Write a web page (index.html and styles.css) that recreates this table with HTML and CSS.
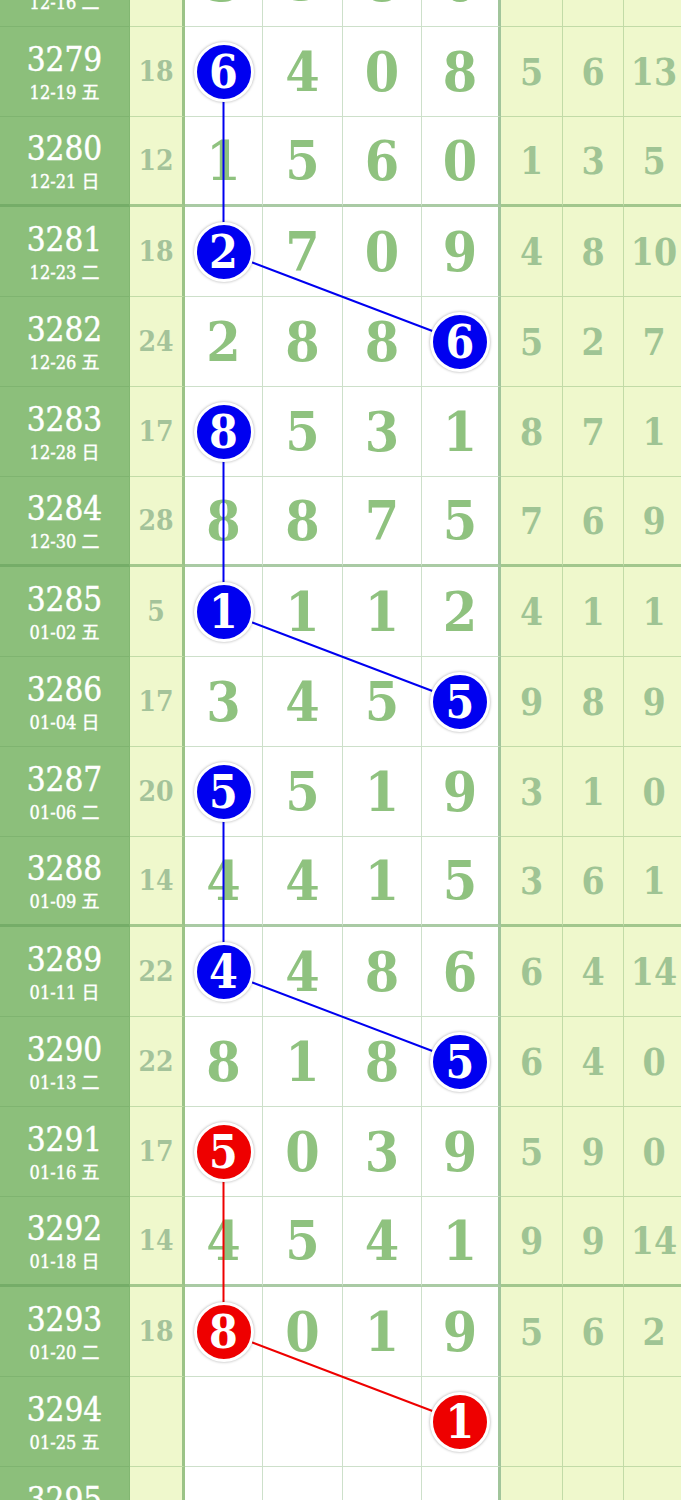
FILE: index.html
```html
<!DOCTYPE html>
<html lang="zh">
<head>
<meta charset="utf-8">
<title>走势图</title>
<link rel="stylesheet" href="styles.css">
</head>
<body>
<div class="table">
  <svg class="lines" width="685" height="1620" viewBox="0 0 685 1620">
    <g stroke="#0000f0" stroke-width="2" fill="none">
      <line x1="223.5" y1="134.5" x2="223.5" y2="314.5"/>
      <line x1="223.5" y1="314.5" x2="460" y2="404.5"/>
      <line x1="223.5" y1="494.5" x2="223.5" y2="674.5"/>
      <line x1="223.5" y1="674.5" x2="460" y2="764.5"/>
      <line x1="223.5" y1="854.5" x2="223.5" y2="1034.5"/>
      <line x1="223.5" y1="1034.5" x2="460" y2="1124.5"/>
    </g>
    <g stroke="#ee0000" stroke-width="2" fill="none">
      <line x1="223.5" y1="1214.5" x2="223.5" y2="1394.5"/>
      <line x1="223.5" y1="1394.5" x2="460" y2="1484.5"/>
    </g>
  </svg>

  <div class="row">
    <div class="c id"><span class="no">3278</span><span class="dt">12-16 二</span></div>
    <div class="c sum">16</div>
    <div class="c d">3</div><div class="c d">5</div><div class="c d">8</div><div class="c d last">0</div>
    <div class="c r">3</div><div class="c r">5</div><div class="c r">8</div>
  </div>

  <div class="row">
    <div class="c id"><span class="no">3279</span><span class="dt">12-19 五</span></div>
    <div class="c sum">18</div>
    <div class="c d"><span class="ball blue">6</span></div><div class="c d">4</div><div class="c d">0</div><div class="c d last">8</div>
    <div class="c r">5</div><div class="c r">6</div><div class="c r">13</div>
  </div>

  <div class="row gend">
    <div class="c id"><span class="no">3280</span><span class="dt">12-21 日</span></div>
    <div class="c sum">12</div>
    <div class="c d">1</div><div class="c d">5</div><div class="c d">6</div><div class="c d last">0</div>
    <div class="c r">1</div><div class="c r">3</div><div class="c r">5</div>
  </div>

  <div class="row">
    <div class="c id"><span class="no">3281</span><span class="dt">12-23 二</span></div>
    <div class="c sum">18</div>
    <div class="c d"><span class="ball blue">2</span></div><div class="c d">7</div><div class="c d">0</div><div class="c d last">9</div>
    <div class="c r">4</div><div class="c r">8</div><div class="c r">10</div>
  </div>

  <div class="row">
    <div class="c id"><span class="no">3282</span><span class="dt">12-26 五</span></div>
    <div class="c sum">24</div>
    <div class="c d">2</div><div class="c d">8</div><div class="c d">8</div><div class="c d last"><span class="ball blue">6</span></div>
    <div class="c r">5</div><div class="c r">2</div><div class="c r">7</div>
  </div>

  <div class="row">
    <div class="c id"><span class="no">3283</span><span class="dt">12-28 日</span></div>
    <div class="c sum">17</div>
    <div class="c d"><span class="ball blue">8</span></div><div class="c d">5</div><div class="c d">3</div><div class="c d last">1</div>
    <div class="c r">8</div><div class="c r">7</div><div class="c r">1</div>
  </div>

  <div class="row gend">
    <div class="c id"><span class="no">3284</span><span class="dt">12-30 二</span></div>
    <div class="c sum">28</div>
    <div class="c d">8</div><div class="c d">8</div><div class="c d">7</div><div class="c d last">5</div>
    <div class="c r">7</div><div class="c r">6</div><div class="c r">9</div>
  </div>

  <div class="row">
    <div class="c id"><span class="no">3285</span><span class="dt">01-02 五</span></div>
    <div class="c sum">5</div>
    <div class="c d"><span class="ball blue">1</span></div><div class="c d">1</div><div class="c d">1</div><div class="c d last">2</div>
    <div class="c r">4</div><div class="c r">1</div><div class="c r">1</div>
  </div>

  <div class="row">
    <div class="c id"><span class="no">3286</span><span class="dt">01-04 日</span></div>
    <div class="c sum">17</div>
    <div class="c d">3</div><div class="c d">4</div><div class="c d">5</div><div class="c d last"><span class="ball blue">5</span></div>
    <div class="c r">9</div><div class="c r">8</div><div class="c r">9</div>
  </div>

  <div class="row">
    <div class="c id"><span class="no">3287</span><span class="dt">01-06 二</span></div>
    <div class="c sum">20</div>
    <div class="c d"><span class="ball blue">5</span></div><div class="c d">5</div><div class="c d">1</div><div class="c d last">9</div>
    <div class="c r">3</div><div class="c r">1</div><div class="c r">0</div>
  </div>

  <div class="row gend">
    <div class="c id"><span class="no">3288</span><span class="dt">01-09 五</span></div>
    <div class="c sum">14</div>
    <div class="c d">4</div><div class="c d">4</div><div class="c d">1</div><div class="c d last">5</div>
    <div class="c r">3</div><div class="c r">6</div><div class="c r">1</div>
  </div>

  <div class="row">
    <div class="c id"><span class="no">3289</span><span class="dt">01-11 日</span></div>
    <div class="c sum">22</div>
    <div class="c d"><span class="ball blue">4</span></div><div class="c d">4</div><div class="c d">8</div><div class="c d last">6</div>
    <div class="c r">6</div><div class="c r">4</div><div class="c r">14</div>
  </div>

  <div class="row">
    <div class="c id"><span class="no">3290</span><span class="dt">01-13 二</span></div>
    <div class="c sum">22</div>
    <div class="c d">8</div><div class="c d">1</div><div class="c d">8</div><div class="c d last"><span class="ball blue">5</span></div>
    <div class="c r">6</div><div class="c r">4</div><div class="c r">0</div>
  </div>

  <div class="row">
    <div class="c id"><span class="no">3291</span><span class="dt">01-16 五</span></div>
    <div class="c sum">17</div>
    <div class="c d"><span class="ball red">5</span></div><div class="c d">0</div><div class="c d">3</div><div class="c d last">9</div>
    <div class="c r">5</div><div class="c r">9</div><div class="c r">0</div>
  </div>

  <div class="row gend">
    <div class="c id"><span class="no">3292</span><span class="dt">01-18 日</span></div>
    <div class="c sum">14</div>
    <div class="c d">4</div><div class="c d">5</div><div class="c d">4</div><div class="c d last">1</div>
    <div class="c r">9</div><div class="c r">9</div><div class="c r">14</div>
  </div>

  <div class="row">
    <div class="c id"><span class="no">3293</span><span class="dt">01-20 二</span></div>
    <div class="c sum">18</div>
    <div class="c d"><span class="ball red">8</span></div><div class="c d">0</div><div class="c d">1</div><div class="c d last">9</div>
    <div class="c r">5</div><div class="c r">6</div><div class="c r">2</div>
  </div>

  <div class="row">
    <div class="c id"><span class="no">3294</span><span class="dt">01-25 五</span></div>
    <div class="c sum"></div>
    <div class="c d"></div><div class="c d"></div><div class="c d"></div><div class="c d last"><span class="ball red">1</span></div>
    <div class="c r"></div><div class="c r"></div><div class="c r"></div>
  </div>

  <div class="row">
    <div class="c id"><span class="no">3295</span><span class="dt">01-27 日</span></div>
    <div class="c sum"></div>
    <div class="c d"></div><div class="c d"></div><div class="c d"></div><div class="c d last"></div>
    <div class="c r"></div><div class="c r"></div><div class="c r"></div>
  </div>
</div>
</body>
</html>
```

FILE: styles.css
```css
html, body {
  margin: 0;
  padding: 0;
  background: #ffffff;
  overflow: hidden;
}

.table {
  position: relative;
  width: 685px;
  margin-top: -63px;
  font-family: "DejaVu Serif", "Noto Sans CJK SC", serif;
  font-stretch: condensed;
}

.lines {
  position: absolute;
  left: 0;
  top: 0;
  z-index: 1;
  pointer-events: none;
}

.row {
  display: grid;
  grid-template-columns: 130px 55px 78px 80px 79px 79px 62px 61px 61px;
  height: 90px;
}

.c {
  box-sizing: border-box;
  border-right: 1px solid rgba(100, 160, 90, 0.32);
  border-bottom: 1px solid rgba(100, 160, 90, 0.32);
  display: flex;
  align-items: center;
  justify-content: center;
}

.row.gend .c {
  border-bottom: 3px solid rgba(100, 160, 90, 0.55);
}

.id {
  background: #8cbf7b;
  color: #ffffff;
  flex-direction: column;
  padding-top: 4px;
  border-right-color: rgba(100, 160, 90, 0.25);
}

.no {
  font-size: 33px;
  line-height: 36px;
  -webkit-text-stroke: 0.4px #ffffff;
}

.dt {
  font-size: 18px;
  line-height: 24px;
  margin-top: 3px;
  -webkit-text-stroke: 0.4px #ffffff;
}

.sum {
  background: #eff8cc;
  color: #a4c39a;
  font-size: 28px;
  font-weight: bold;
  border-right: 3px solid rgba(100, 160, 90, 0.6);
}

.d {
  background: #ffffff;
  color: #8fc27f;
  font-size: 55px;
  font-weight: bold;
}

.d.last {
  border-right: 3px solid rgba(100, 160, 90, 0.6);
}

.r {
  background: #eff8cc;
  color: #9fc494;
  font-size: 37px;
  font-weight: bold;
}

.ball {
  position: relative;
  z-index: 2;
  box-sizing: border-box;
  width: 60px;
  height: 60px;
  border-radius: 50%;
  border: 3px solid #ffffff;
  box-shadow: 0 0 3px rgba(0, 0, 0, 0.35);
  color: #ffffff;
  font-size: 46px;
  font-weight: bold;
  line-height: 1;
  display: flex;
  align-items: center;
  justify-content: center;
}

.ball.blue {
  background: #0000f0;
}

.ball.red {
  background: #ee0000;
}
```
